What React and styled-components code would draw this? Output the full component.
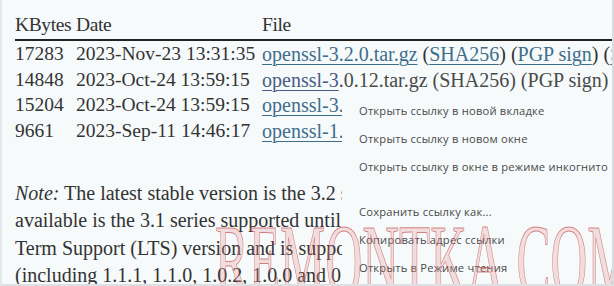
import styled, { createGlobalStyle } from 'styled-components';


const GlobalStyle = createGlobalStyle`
    html, body {
        margin: 0;
        padding: 0;
        background: #f6fafb;
        overflow: hidden;
    }
`;

const Frame = styled.div`
    position: relative;
    box-sizing: border-box;
    width: 614px;
    height: 286px;
    overflow: hidden;
    padding: 13px 0 0 13px;
    border-left: 2px solid #e4e8ea;
    border-right: 2px solid #d8dcde;
    border-bottom: 2px solid #dde1e3;
    font-family: "Liberation Serif", "DejaVu Serif", serif;
    font-size: 20px;
    color: #333;
`;

const Table = styled.div`
    display: grid;
    grid-template-columns: 61px 186px max-content;
    white-space: nowrap;
    font-size: 19.5px;
`;

const HeadCell = styled.div`
    line-height: 24px;
    padding-bottom: 2px;
    letter-spacing: -0.4px;
    border-bottom: 2px solid #222;
`;

const Cell = styled.div`
    line-height: 24.5px;
    padding-top: 1px;
    margin-bottom: -1px;
    color: ${({ $muted }) => ($muted ? '#4a4a4a' : '#333')};
`;

const FileText = styled.span`
    font-size: 20px;
`;

const Link = styled.a`
    color: ${({ $hover }) => ($hover ? '#4b5b86' : '#3e6e8c')};
    text-decoration: underline;
    text-decoration-thickness: 1px;
    text-underline-offset: 3px;
`;

const Note = styled.p`
    margin: 37px 0 0;
    line-height: 27.3px;
    white-space: pre;
`;

const Menu = styled.ul`
    position: absolute;
    left: 340px;
    top: 93px;
    right: 0;
    bottom: 0;
    margin: 0;
    padding: 4px 0 0;
    list-style: none;
    background: #f6fafb;
    font-family: "Open Sans", "Noto Sans", sans-serif;
    font-size: 11.2px;
    letter-spacing: 0.2px;
    color: #4a4a4a;
`;

const MenuItem = styled.li`
    padding-left: 17px;
    line-height: 28px;
    white-space: nowrap;
`;

const Separator = styled.li`
    height: 17px;
`;

const Watermark = styled.div`
    position: absolute;
    left: 213px;
    top: 209px;
    font-family: "Liberation Serif", serif;
    font-size: 104px;
    line-height: 1;
    white-space: nowrap;
    color: rgba(230, 155, 155, 0.3);
    -webkit-text-stroke: 1px rgba(190, 55, 55, 0.6);
    transform: scaleX(0.49);
    transform-origin: left top;
    pointer-events: none;
`;

const rows = [
    { size: '17283', date: '2023-Nov-23 13:31:35', file: 'openssl-3.2.0.tar.gz' },
    { size: '14848', date: '2023-Oct-24 13:59:15', file: 'openssl-3.0.12.tar.gz', odd: true },
    { size: '15204', date: '2023-Oct-24 13:59:15', file: 'openssl-3.1.4.tar.gz' },
    { size: '9661', date: '2023-Sep-11 14:46:17', file: 'openssl-1.1.1w.tar.gz' },
];

const noteLines = [
    'The latest stable version is the 3.2 series supported until 23rd November 2025. Also',
    'available is the 3.1 series supported until 14th March 2025, and the 3.0 series which is a Long',
    'Term Support (LTS) version and is supported until 7th September 2026. All older versions',
    '(including 1.1.1, 1.1.0, 1.0.2, 1.0.0 and 0.9.8) are now out of support and should not be used.',
];

const menuItems = [
    'Открыть ссылку в новой вкладке',
    'Открыть ссылку в новом окне',
    'Открыть ссылку в окне в режиме инкогнито',
    null,
    'Сохранить ссылку как...',
    'Копировать адрес ссылки',
    'Открыть в Режиме чтения',
];


function FileCell({ row }) {
    if (row.odd) {
        return (
            <Cell $muted>
                <FileText>
                    <Link $hover href="#">openssl-3</Link>.0.12.tar.gz (SHA256) (PGP sign) (SHA1)
                </FileText>
            </Cell>
        );
    }
    return (
        <Cell>
            <FileText>
                <Link href="#">{row.file}</Link> (<Link href="#">SHA256</Link>) (<Link href="#">PGP sign</Link>) (<Link href="#">SHA1</Link>)
            </FileText>
        </Cell>
    );
}


export default function App() {
    return (
        <>
            <GlobalStyle />
            <Frame>
                <Table>
                    <HeadCell>KBytes</HeadCell>
                    <HeadCell>Date</HeadCell>
                    <HeadCell>File</HeadCell>
                    {rows.map((row) => [
                        <Cell key={row.size + 's'}>{row.size}</Cell>,
                        <Cell key={row.size + 'd'}>{row.date}</Cell>,
                        <FileCell key={row.size + 'f'} row={row} />,
                    ])}
                </Table>
                <Note>
                    <em>Note:</em> {noteLines.join('\n')}
                </Note>
                <Menu>
                    {menuItems.map((item, i) =>
                        item ? <MenuItem key={i}>{item}</MenuItem> : <Separator key={i} />
                    )}
                </Menu>
                <Watermark>REMONTKA.COM</Watermark>
            </Frame>
        </>
    );
}
